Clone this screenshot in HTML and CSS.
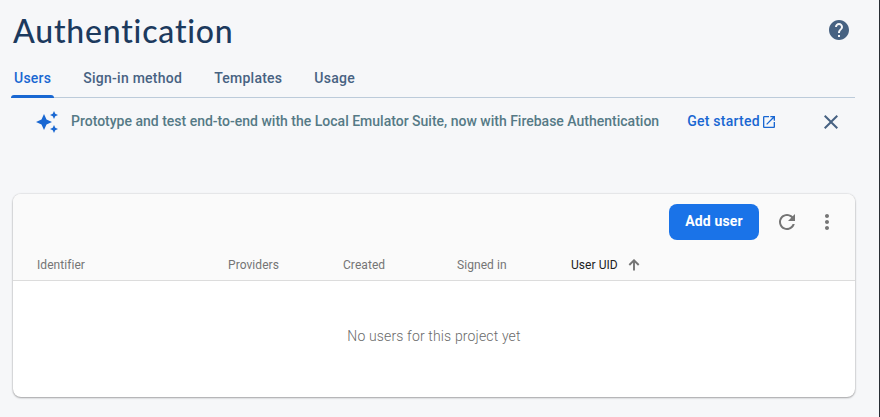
FILE: index.html
```html
<!DOCTYPE html>
<html lang="en">
<head>
<meta charset="utf-8">
<title>Authentication</title>
<link rel="stylesheet" href="styles.css">
</head>
<body>
<main class="page">
  <header class="header">
    <h1 class="title">Authentication</h1>
    <svg class="help" viewBox="0 0 24 24"><path d="M12 2C6.48 2 2 6.48 2 12s4.48 10 10 10 10-4.480 10-10S17.520 2 12 2zm1 17h-2v-2h2v2zm2.070-7.750l-.9.920C13.450 12.900 13 13.500 13 15h-2v-.5c0-1.100.45-2.100 1.170-2.830l1.240-1.260c.37-.36.59-.86.59-1.410 0-1.100-.9-2-2-2s-2 .9-2 2H8c0-2.210 1.790-4 4-4s4 1.790 4 4c0 .88-.36 1.680-.93 2.250z"/></svg>
  </header>
  <nav class="tabs">
    <a class="tab tab-active">Users</a>
    <a class="tab">Sign-in method</a>
    <a class="tab">Templates</a>
    <a class="tab">Usage</a>
  </nav>
  <section class="banner">
    <svg class="spark" viewBox="0 0 24 24"><path d="M19 9l1.250-2.750L23 5l-2.750-1.250L19 1l-1.250 2.750L15 5l2.750 1.250L19 9zm-7.500.5L9 4 6.500 9.500 1 12l5.500 2.500L9 20l2.500-5.500L17 12l-5.500-2.500zM19 15l-1.250 2.750L15 19l2.750 1.250L19 23l1.250-2.750L23 19l-2.750-1.250L19 15z"/></svg>
    <span class="message">Prototype and test end-to-end with the Local Emulator Suite, now with Firebase Authentication</span>
    <a class="link"><span class="link-text">Get started</span><svg class="open" viewBox="0 0 24 24"><path d="M19 19H5V5h7V3H5c-1.110 0-2 .9-2 2v14c0 1.100.89 2 2 2h14c1.100 0 2-.9 2-2v-7h-2v7zM14 3v2h3.590l-9.830 9.830 1.410 1.410L19 6.410V10h2V3h-7z"/></svg></a>
    <svg class="close" viewBox="0 0 24 24"><path d="M19 6.410L17.590 5 12 10.590 6.410 5 5 6.410 10.590 12 5 17.590 6.410 19 12 13.410 17.590 19 19 17.590 13.410 12z"/></svg>
  </section>
  <section class="card">
    <div class="toolbar">
      <button class="add">Add user</button>
      <svg class="action" viewBox="0 0 24 24"><path d="M17.650 6.350C16.200 4.900 14.210 4 12 4c-4.420 0-7.990 3.580-7.990 8s3.570 8 7.990 8c3.730 0 6.840-2.550 7.730-6h-2.080c-.82 2.330-3.040 4-5.650 4-3.310 0-6-2.690-6-6s2.690-6 6-6c1.660 0 3.140.69 4.220 1.780L13 11h7V4l-2.350 2.350z"/></svg>
      <svg class="action" viewBox="0 0 24 24"><path d="M12 8c1.100 0 2-.9 2-2s-.9-2-2-2-2 .9-2 2 .9 2 2 2zm0 2c-1.100 0-2 .9-2 2s.9 2 2 2 2-.9 2-2-.9-2-2-2zm0 6c-1.100 0-2 .9-2 2s.9 2 2 2 2-.9 2-2-.9-2-2-2z"/></svg>
    </div>
    <div class="columns">
      <span>Identifier</span>
      <span>Providers</span>
      <span>Created</span>
      <span>Signed in</span>
      <span class="sorted">User UID<svg class="arrow" viewBox="0 0 12 12"><path d="M6 11.500V1.500M1.300 6L6 1.300 10.700 6"/></svg></span>
    </div>
    <div class="empty">No users for this project yet</div>
  </section>
</main>
</body>
</html>
```
FILE: styles.css
```css
* { box-sizing: border-box; }
body {
  margin: 0;
  height: 417px;
  overflow: hidden;
  background: #f6f7f9;
  border-right: 1px solid #282d34;
  font-family: Roboto, sans-serif;
}
svg { display: block; flex: none; fill: currentColor; }
.page { padding: 0 24px 0 12px; }
.header {
  display: flex;
  align-items: center;
  justify-content: space-between;
  height: 60px;
  padding-right: 4px;
}
.title {
  margin: 0;
  padding: 2px 0 0 1px;
  color: #1c3a5e;
  font: 500 32px/40px Lato, sans-serif;
  letter-spacing: 0.8px;
}
.help { width: 24px; height: 24px; color: #476282; }
.tabs {
  display: flex;
  height: 38px;
  margin-left: -1px;
  border-bottom: 1px solid #bccbda;
}
.tab {
  height: 38px;
  padding: 0 3px;
  margin-right: 26px;
  color: #476282;
  font-size: 14px;
  font-weight: 500;
  line-height: 37px;
  letter-spacing: 0.25px;
}
.tab-active {
  position: relative;
  color: #1967d2;
}
.tab-active::after {
  content: "";
  position: absolute;
  left: 0;
  right: 0;
  bottom: 0;
  height: 3px;
  border-radius: 3px 3px 0 0;
  background: #1967d2;
}
.banner {
  display: flex;
  align-items: center;
  height: 48px;
  padding: 0 12px 0 23px;
  font-size: 14px;
  font-weight: 500;
}
.spark { width: 24px; height: 24px; color: #1967d2; }
.message {
  margin-left: 12px;
  padding-bottom: 2px;
  color: #557a86;
  line-height: 20px;
  white-space: nowrap;
}
.link {
  display: flex;
  align-items: center;
  margin-left: 28px;
  color: #1967d2;
  line-height: 20px;
  letter-spacing: 0.25px;
  white-space: nowrap;
}
.link-text { padding-bottom: 2px; }
.open { width: 16px; height: 16px; margin-left: 1px; }
.close { width: 24px; height: 24px; margin-left: auto; color: #476282; }
.card {
  height: 203px;
  margin: 48px 0 0 1px;
  overflow: hidden;
  border-radius: 8px;
  background: #fff;
  box-shadow: 0 1px 2px rgba(0, 0, 0, .3), 0 0 2px rgba(0, 0, 0, .2);
}
.toolbar {
  display: flex;
  align-items: center;
  justify-content: flex-end;
  gap: 16px;
  height: 56px;
  padding-right: 16px;
  background: #fafafa;
}
.add {
  width: 90px;
  height: 36px;
  padding: 0 0 2px;
  border: 0;
  border-radius: 8px;
  background: #1a73e8;
  color: #fff;
  font: 700 14px/34px Roboto, sans-serif;
  letter-spacing: 0.15px;
}
.action { width: 24px; height: 24px; color: #757575; }
.columns {
  display: grid;
  grid-template-columns: 191px 115px 114px 114px 1fr;
  height: 31px;
  padding-left: 24px;
  border-bottom: 1px solid #dcdcdc;
  background: #fafafa;
  color: #757575;
  font-size: 12px;
  line-height: 30px;
  letter-spacing: 0.06px;
}
.sorted { display: flex; align-items: center; color: #212121; }
.arrow {
  width: 12px;
  height: 12px;
  margin-left: 10px;
  fill: none;
  stroke: #757575;
  stroke-width: 1.9;
}
.empty {
  color: #6a6a6a;
  font-size: 14px;
  font-weight: 300;
  line-height: 110px;
  letter-spacing: 0.15px;
  text-align: center;
}
```
